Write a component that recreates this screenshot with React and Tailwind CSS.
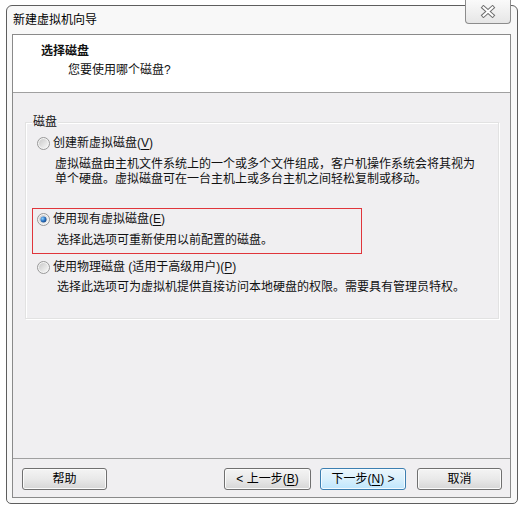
import React from 'react';

const Radio = ({ checked }) => (
  <svg width="13" height="13" viewBox="0 0 13 13" className="shrink-0">
    <defs>
      <linearGradient id="rg" x1="0" y1="0" x2="1" y2="1">
        <stop offset="0" stopColor="#c9c9c9" />
        <stop offset="1" stopColor="#f7f7f7" />
      </linearGradient>
      <radialGradient id="dot" cx="0.35" cy="0.35" r="0.75">
        <stop offset="0" stopColor="#8fd3ff" />
        <stop offset="0.55" stopColor="#2a73c4" />
        <stop offset="1" stopColor="#143e7a" />
      </radialGradient>
    </defs>
    <circle cx="6.5" cy="6.5" r="6" fill="#f4f4f4" stroke="#979797" />
    <circle cx="6.5" cy="6.5" r="4.5" fill="url(#rg)" />
    {checked && <circle cx="6.5" cy="6.5" r="3" fill="url(#dot)" />}
  </svg>
);

const Btn = ({ children, primary, w = 'w-[86px]' }) => (
  <button
    className={
      primary
        ? `${w} h-[22px] rounded-[3px] border border-[#3c7fb1] bg-linear-to-b from-[#eaf6fd] via-[#d9f0fc] to-[#bee6fd] shadow-[inset_0_0_0_1px_#f4fbff] text-[12px] leading-[20px] text-black`
        : `${w} h-[22px] rounded-[3px] border border-[#707070] bg-linear-to-b from-[#f4f4f4] via-[#e9e9e9] to-[#d6d6d6] shadow-[inset_0_0_0_1px_#fbfbfb] text-[12px] leading-[20px] text-black`
    }
  >
    {children}
  </button>
);

const U = ({ children }) => <span className="underline underline-offset-2">{children}</span>;

export default function App() {
  return (
    <div className="relative w-[524px] h-[510px] bg-white overflow-hidden font-['Liberation_Sans','Noto_Sans_CJK_SC',sans-serif] text-[12px] text-[#111]">
      <div className="ml-[6px] mt-[5px] w-[512px] h-[499px] flex flex-col border border-[#5e5e5e] rounded-t-[6px] rounded-b-[5px] bg-[#f8f8f8] pl-[5px] pr-[6px] pb-[5px]">
        {/* title bar */}
        <div className="h-[28px] flex items-center pl-[1px] text-[12px] text-black">新建虚拟机向导</div>

        {/* client area */}
        <div className="flex-1 flex flex-col border border-[#8a8a8a] bg-[#f0eff1]">
          {/* header */}
          <div className="h-[58px] bg-white border-b border-[#a0a0a0] flex flex-col">
            <div className="pl-[28px] pt-[9px] leading-[14px] font-bold text-[12px]">选择磁盘</div>
            <div className="pl-[55px] pt-[5px] leading-[14px]">您要使用哪个磁盘?</div>
          </div>

          {/* body */}
          <div className="flex-1 pt-[29px] pl-[12px] pr-[11px]">
            <div className="relative h-[197px] border border-[#e2e2e2] shadow-[inset_1px_1px_0_#ffffff,1px_1px_0_#ffffff] pt-[12px]">
              <span className="absolute -top-[8px] left-[6px] px-[1px] leading-[14px] bg-[#f0eff1]">磁盘</span>

              <div className="flex items-center gap-[3px] h-[16px] pl-[11px]">
                <Radio />
                <span>创建新虚拟磁盘(<U>V</U>)</span>
              </div>
              <div className="pl-[29px] mt-[6px] leading-[15px]">
                <div>虚拟磁盘由主机文件系统上的一个或多个文件组成，客户机操作系统会将其视为</div>
                <div>单个硬盘。虚拟磁盘可在一台主机上或多台主机之间轻松复制或移动。</div>
              </div>

              <div className="ml-[6px] mt-[21px] w-[330px] h-[46px] border border-[#e0353b] pt-[2px]">
                <div className="flex items-center gap-[3px] h-[16px] pl-[4px]">
                  <Radio checked />
                  <span>使用现有虚拟磁盘(<U>E</U>)</span>
                </div>
                <div className="pl-[24px] mt-[6px] leading-[14px]">选择此选项可重新使用以前配置的磁盘。</div>
              </div>

              <div className="flex items-center gap-[3px] h-[16px] pl-[11px] mt-[5px]">
                <Radio />
                <span>使用物理磁盘 (适用于高级用户)(<U>P</U>)</span>
              </div>
              <div className="pl-[31px] mt-[5px] leading-[14px]">选择此选项可为虚拟机提供直接访问本地硬盘的权限。需要具有管理员特权。</div>
            </div>
          </div>

          {/* footer */}
          <div className="border-t border-[#a0a0a0] pt-[9px] pb-[7px] pl-[9px] pr-[8px] flex items-center">
            <Btn w="w-[85px]">帮助</Btn>
            <div className="ml-auto flex items-center gap-[9px]">
              <Btn w="w-[87px]">&lt; 上一步(<U>B</U>)</Btn>
              <Btn primary w="w-[86px]">下一步(<U>N</U>) &gt;</Btn>
            </div>
            <div className="ml-[11px]">
              <Btn w="w-[85px]">取消</Btn>
            </div>
          </div>
        </div>
      </div>

      {/* close button */}
      <div className="absolute top-0 left-[465px] w-[46px] h-[24px] rounded-b-[4px] border border-t-0 border-[#8c8c8c] bg-linear-to-b from-[#fafafa] to-[#e6e6e6] flex items-center justify-center">
        <svg width="16" height="13" viewBox="0 0 16 13">
          <path d="M3.5 2.5 L12.5 10.5 M12.5 2.5 L3.5 10.5" stroke="#707070" strokeWidth="4" strokeLinecap="square" fill="none" />
          <path d="M3.5 2.5 L12.5 10.5 M12.5 2.5 L3.5 10.5" stroke="#ffffff" strokeWidth="2" strokeLinecap="square" fill="none" />
        </svg>
      </div>
    </div>
  );
}
